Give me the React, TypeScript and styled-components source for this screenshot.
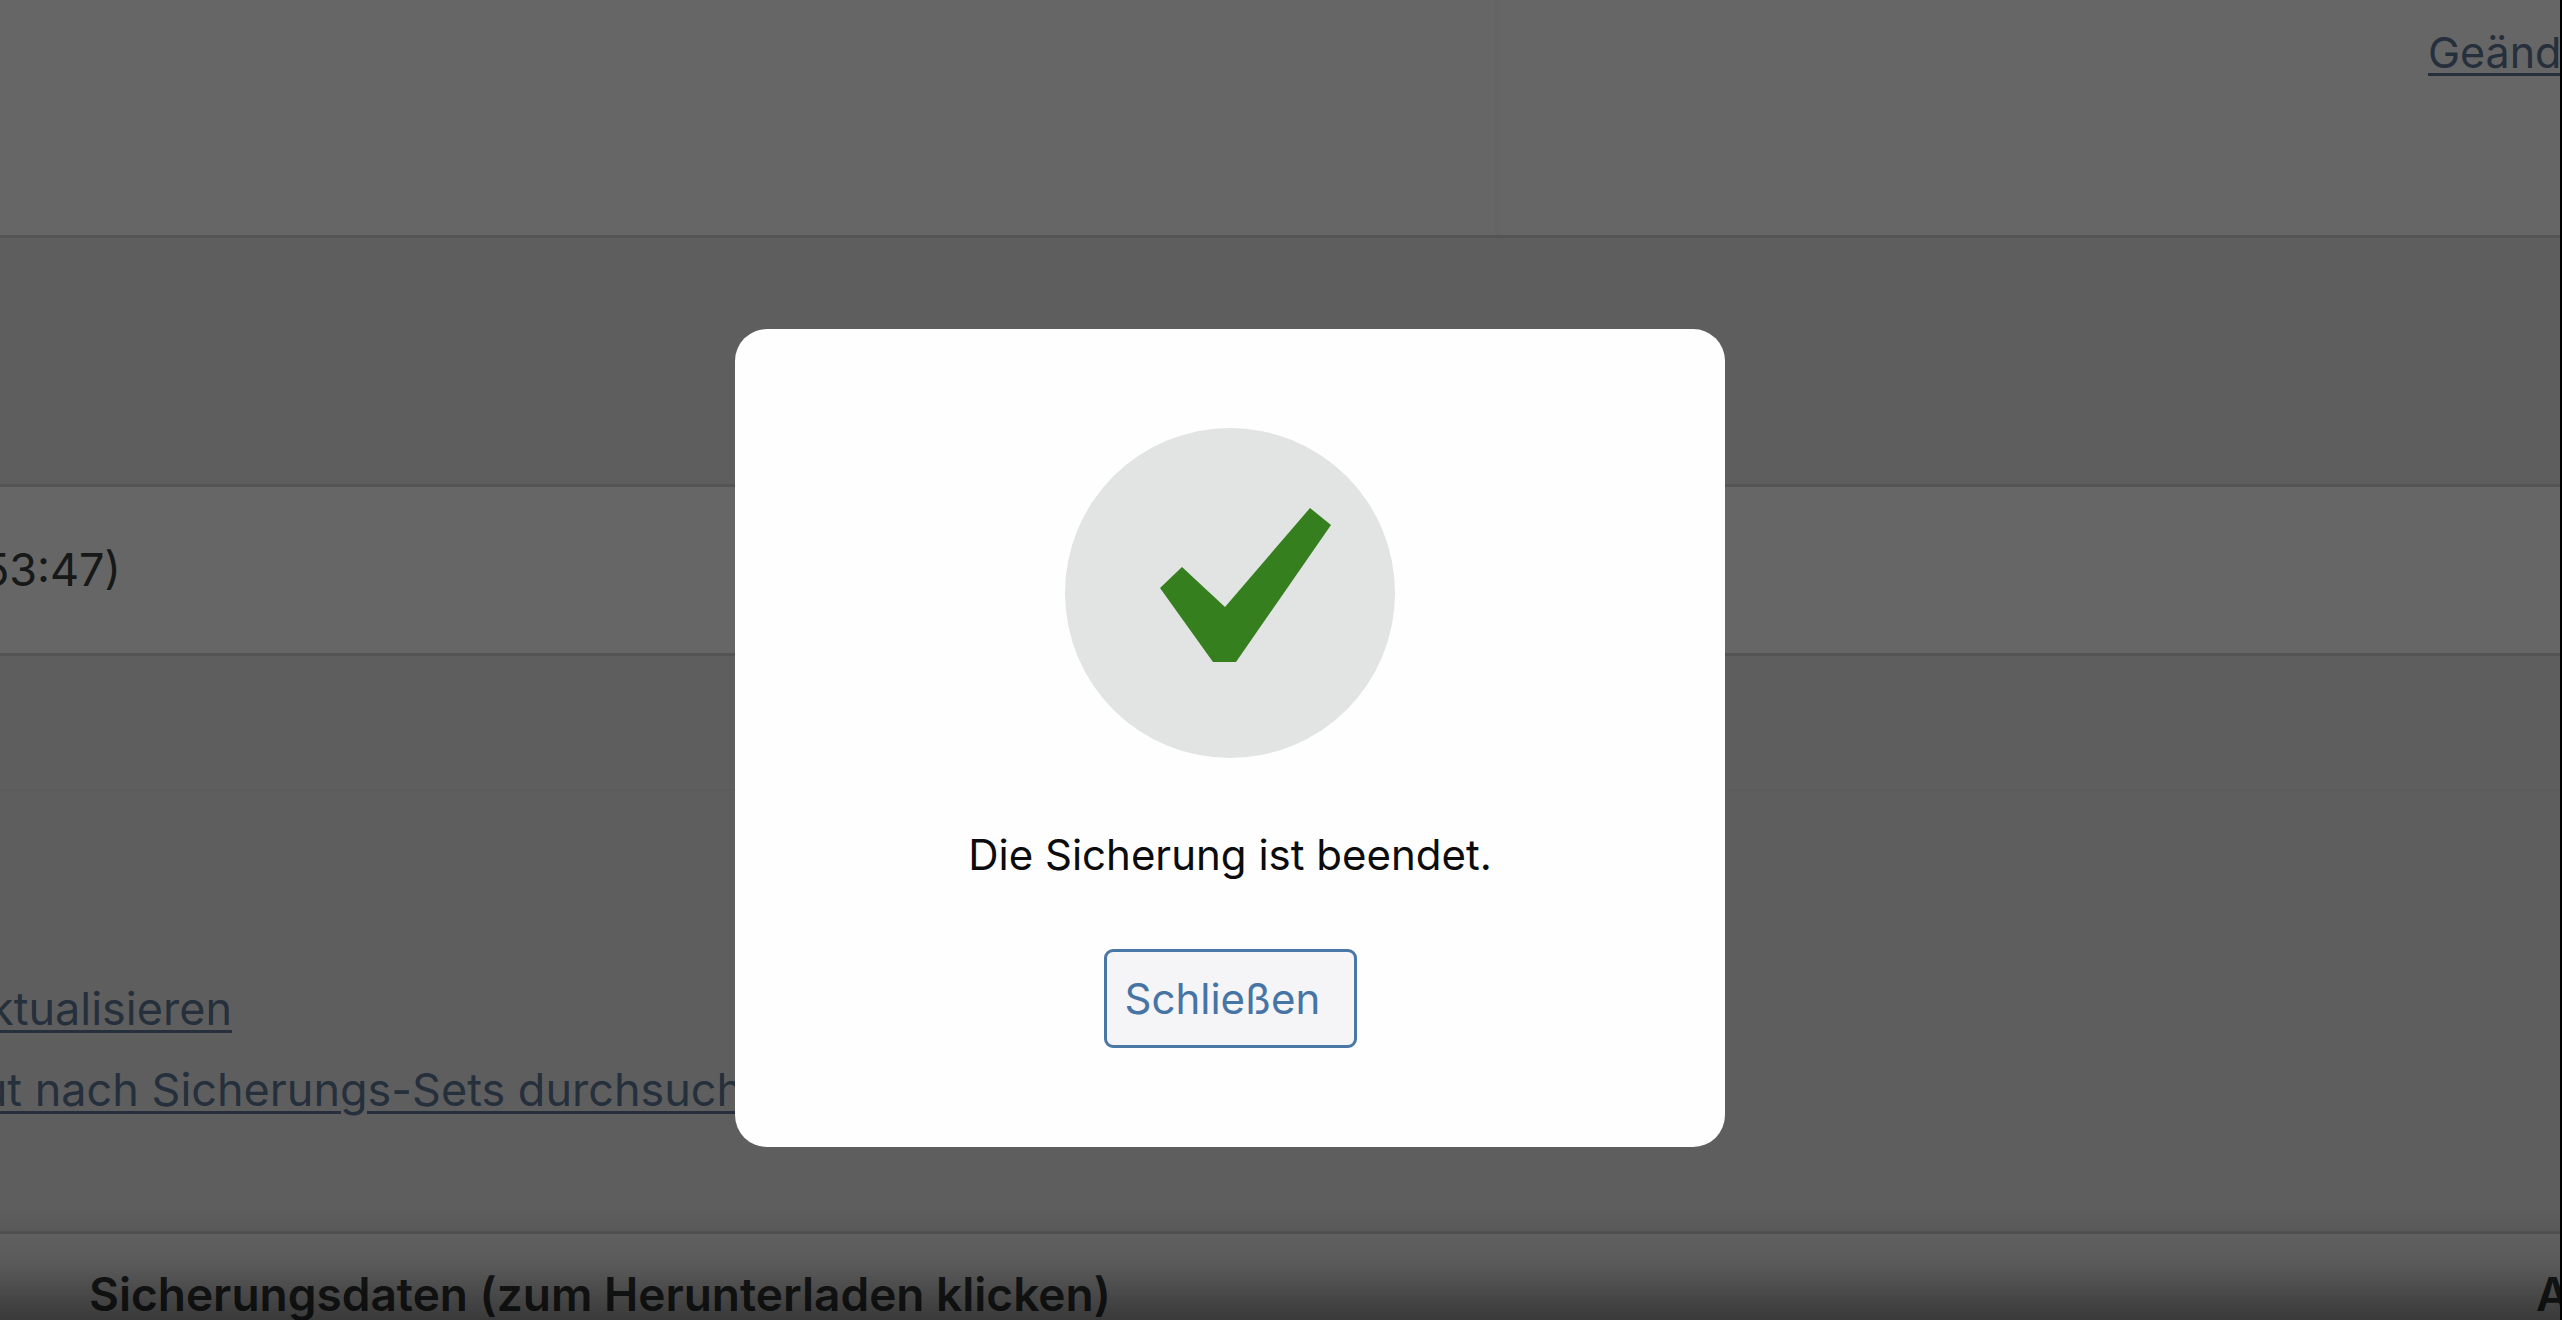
import React from "react";
import styled, { createGlobalStyle } from "styled-components";

const GlobalStyle = createGlobalStyle`
  * { box-sizing: border-box; }
  body {
    margin: 0;
    background: #ececec;
    color: #3a3c3e;
    font-family: Inter, "Liberation Sans", sans-serif;
    font-size: 45px;
    line-height: 60px;
    overflow: hidden;
  }
  p { margin: 0; }
`;

const Page = styled.main`
  display: flex;
  flex-direction: column;
  height: 100vh;
  overflow: hidden;
  border-right: 2px solid #000;
`;

const TopPanel = styled.section`
  display: flex;
  flex: none;
  height: 238px;
  background: #fff;
  border-bottom: 3px solid #d2d2d2;
`;

const TopMain = styled.div`
  flex: 1;
  border-right: 5px solid #fafafa;
`;

const TopSide = styled.div`
  display: flex;
  justify-content: flex-end;
  width: 1060px;
  padding-top: 22px;
  overflow: hidden;
  font-size: 43px;
`;

const Clip = styled.div<{ $width: number; $fromEnd?: boolean }>`
  display: flex;
  flex: none;
  justify-content: ${(p) => (p.$fromEnd ? "flex-end" : "flex-start")};
  width: ${(p) => p.$width}px;
  overflow: hidden;
  white-space: nowrap;
`;

const Link = styled.a`
  color: #5c7896;
  white-space: nowrap;
  text-decoration: underline;
  text-decoration-thickness: 3px;
  text-underline-offset: 5px;
`;

const LogRow = styled.section`
  display: flex;
  flex: none;
  align-items: center;
  height: 172px;
  margin-top: 246px;
  background: #fff;
  border: solid #d2d2d2;
  border-width: 3px 0;
`;

const Actions = styled.section`
  display: flex;
  flex: none;
  flex-direction: column;
  gap: 21px;
  height: 442px;
  margin-top: 133px;
  padding-top: 188px;
  border-top: 2px solid #e7e7e7;
`;

const Table = styled.table`
  width: 100%;
  flex: none;
  border-collapse: collapse;
  border-top: 3px solid #d2d2d2;
  background: #fff;
  table-layout: fixed;
`;

const HeadCell = styled.th<{ $width?: string }>`
  width: ${(p) => p.$width ?? "auto"};
  padding: 30px 0 0;
  font-size: 46px;
  text-align: left;
  font-weight: 600;
  white-space: nowrap;
  overflow: hidden;
`;

const Backdrop = styled.div`
  position: fixed;
  inset: 0 2px 0 0;
  display: flex;
  align-items: flex-start;
  justify-content: center;
  padding: 329px 100px 0 0;
  background: rgba(0, 0, 0, 0.6);
`;

const BottomShade = styled.div`
  position: fixed;
  inset: auto 0 0 0;
  height: 110px;
  background: linear-gradient(rgba(0, 0, 0, 0), rgba(0, 0, 0, 0.12) 50%, rgba(0, 0, 0, 0.43));
  pointer-events: none;
`;

const Dialog = styled.div`
  display: flex;
  flex-direction: column;
  align-items: center;
  width: 990px;
  padding: 99px 0;
  border-radius: 32px;
  background: #fefefe;
  color: #0c0c0c;
`;

const Check = styled.svg`
  width: 330px;
  height: 330px;
`;

const Message = styled.p`
  margin: 67px 0 64px;
  font-size: 42px;
`;

const CloseButton = styled.button`
  width: 253px;
  height: 99px;
  padding: 0 18px;
  border: 3px solid #4a78a6;
  border-radius: 9px;
  background: #f5f5f7;
  color: #4674a5;
  font: inherit;
  font-size: 42px;
  text-align: left;
`;

export default function App() {
  return (
    <>
      <GlobalStyle />
      <Page>
        <TopPanel>
          <TopMain />
          <TopSide>
            <Clip $width={132}>
              <Link href="#files">Geänd</Link>
            </Clip>
          </TopSide>
        </TopPanel>
        <LogRow>
          <Clip $width={121} $fromEnd>53:47)</Clip>
        </LogRow>
        <Actions>
          <Clip $width={232} $fromEnd>
            <Link href="#refresh">ktualisieren</Link>
          </Clip>
          <Clip $width={796} $fromEnd>
            <Link href="#rescan">ut nach Sicherungs-Sets durchsuchen</Link>
          </Clip>
        </Actions>
        <Table>
          <thead>
            <tr>
              <HeadCell $width="89px" aria-label="Auswahl" />
              <HeadCell>Sicherungsdaten (zum Herunterladen klicken)</HeadCell>
              <HeadCell $width="24px">A</HeadCell>
            </tr>
          </thead>
        </Table>
      </Page>
      <Backdrop>
        <Dialog role="dialog" aria-modal="true" aria-labelledby="done-message">
          <Check viewBox="0 0 330 330" aria-hidden="true">
            <circle cx="165" cy="165" r="165" fill="#e1e4e3" />
            <path d="M95 160 117 139 160 179 245 80 266 97 171 234H148Z" fill="#367f1f" />
          </Check>
          <Message id="done-message">Die Sicherung ist beendet.</Message>
          <CloseButton type="button">Schließen</CloseButton>
        </Dialog>
      </Backdrop>
      <BottomShade />
    </>
  );
}
